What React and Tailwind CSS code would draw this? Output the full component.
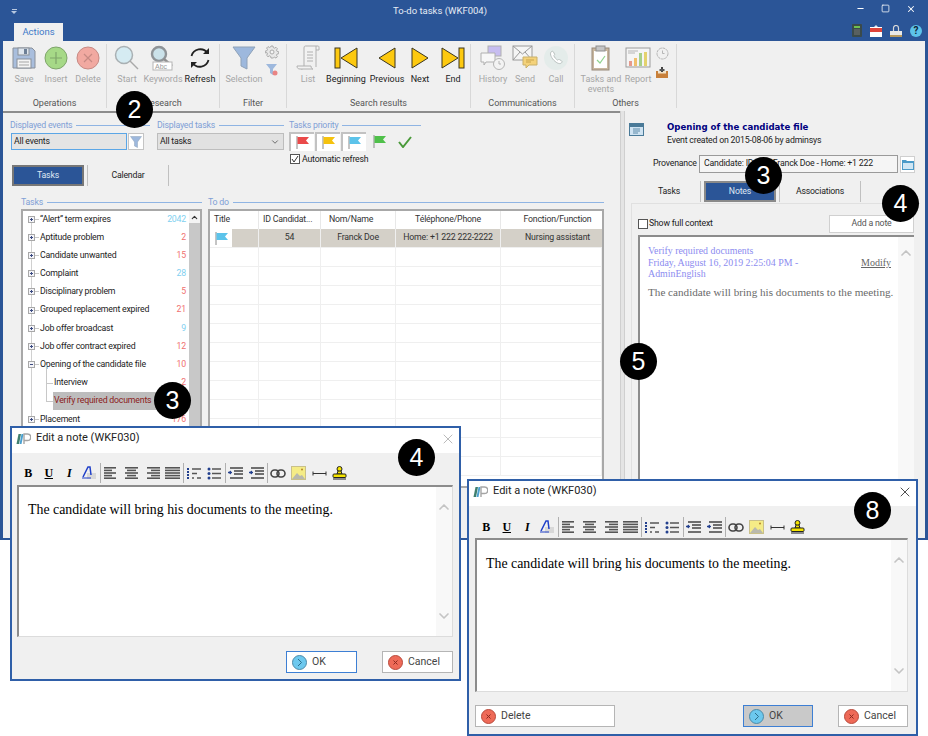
import { ChevronUp, ChevronDown, X, Minus, Square } from "lucide-react";

const Save = () => (
  <svg width="24" height="24" viewBox="0 0 24 24">
    <path d="M1 2h19l3 3v17H1z" fill="#a9bedd" stroke="#8a9099" />
    <rect x="6" y="2" width="11" height="7" fill="#dfe6ee" stroke="#8a9099" />
    <rect x="12" y="3" width="3" height="5" fill="#6d7f96" />
    <rect x="5" y="13" width="14" height="9" fill="#f4f4f4" stroke="#8a9099" />
    <path d="M7 16h10M7 19h10" stroke="#a5a5a5" />
  </svg>
);
const Circle = ({ fill, stroke, children }) => (
  <svg width="24" height="24" viewBox="0 0 24 24">
    <circle cx="12" cy="12" r="11" fill={fill} stroke={stroke} />
    <g stroke={stroke} strokeWidth="1.2" fill="none">{children}</g>
  </svg>
);
const Magnifier = () => (
  <svg width="26" height="26" viewBox="0 0 26 26">
    <circle cx="10" cy="10" r="8.5" fill="#d5ebf2" stroke="#a9b0b3" strokeWidth="1.5" />
    <path d="M16 16l8 8" stroke="#a9a9a9" strokeWidth="1.5" />
  </svg>
);
const Keywords = () => (
  <svg width="26" height="26" viewBox="0 0 26 26">
    <circle cx="9" cy="9" r="7" fill="#cbe2ea" stroke="#8f9498" strokeWidth="2.4" />
    <path d="M14 14l8 7" stroke="#8f8f8f" strokeWidth="2.4" />
    <rect x="3" y="17" width="19" height="8" fill="#fff" stroke="#b5b5b5" />
    <text x="5" y="24" fontSize="7" fill="#9a9a9a" fontFamily="Liberation Sans, sans-serif">Abc</text>
  </svg>
);
const Refresh = () => (
  <svg width="24" height="24" viewBox="0 0 24 24" fill="none" stroke="#222" strokeWidth="1.8">
    <path d="M3.5 10a9 9 0 0 1 16-3" />
    <path d="M20.5 14a9 9 0 0 1-16 3" />
    <path d="M21 2v6h-6z" fill="#222" stroke="none" />
    <path d="M3 22v-6h6z" fill="#222" stroke="none" />
  </svg>
);
const Funnel = ({ size = 24 }) => (
  <svg width={size} height={size} viewBox="0 0 24 24">
    <path d="M1 1h22l-8 11v11l-6-3v-8z" fill="#9db8dd" stroke="#8fa2b8" />
  </svg>
);
const Gear = () => (
  <svg width="14" height="14" viewBox="0 0 14 14" fill="#e8e8e8" stroke="#aaa">
    <path d="M6 1h2l.3 1.6 1.3.6L11 2.3l1.4 1.4-.9 1.4.6 1.3 1.6.3v2l-1.6.3-.6 1.3.9 1.4-1.4 1.4-1.4-.9-1.3.6L8 13H6l-.3-1.6-1.3-.6-1.4.9-1.4-1.4.9-1.4-.6-1.3L.3 8V6l1.6-.3.6-1.3-.9-1.4L3 1.6l1.4.9 1.3-.6z" />
    <circle cx="7" cy="7" r="2" fill="#f4f4f4" />
  </svg>
);
const SmallFunnel = () => (
  <svg width="14" height="14" viewBox="0 0 14 14">
    <path d="M1 1h11l-4 5v6l-3-2V6z" fill="#9db8dd" />
    <circle cx="10" cy="10" r="2.5" fill="#e98484" />
  </svg>
);
const Scroll = () => (
  <svg width="24" height="26" viewBox="0 0 24 26" fill="#f2f2f2" stroke="#b0b0b0">
    <path d="M5 24c3 0 3-2 3-3V3c0-2 1-2 2-2h12c1 0 1 1 1 2v2h-3" />
    <path d="M1 21h14c0 2 1 3 2 3H4c-2 0-3-1-3-3z" />
    <path d="M20 1v21" />
    <path d="M11 7h6M11 10h6M11 13h6M11 16h6" />
  </svg>
);
const Beginning = () => (
  <svg width="24" height="22" viewBox="0 0 24 22">
    <rect x="1" y="1" width="5" height="20" fill="#fdc90f" stroke="#3a3520" />
    <path d="M23 1v20L7 11z" fill="#fdc90f" stroke="#3a3520" />
  </svg>
);
const Previous = () => (
  <svg width="18" height="22" viewBox="0 0 18 22">
    <path d="M17 1v20L1 11z" fill="#fdc90f" stroke="#3a3520" />
  </svg>
);
const Next = () => (
  <svg width="18" height="22" viewBox="0 0 18 22">
    <path d="M1 1v20l16-10z" fill="#fdc90f" stroke="#3a3520" />
  </svg>
);
const End = () => (
  <svg width="24" height="22" viewBox="0 0 24 22">
    <rect x="18" y="1" width="5" height="20" fill="#fdc90f" stroke="#3a3520" />
    <path d="M1 1v20l16-10z" fill="#fdc90f" stroke="#3a3520" />
  </svg>
);
const History = () => (
  <svg width="26" height="26" viewBox="0 0 26 26">
    <rect x="8" y="1" width="13" height="10" fill="#c7bdf0" stroke="#b0b0b0" />
    <path d="M1 8h14v9H6l-2 3v-3H1z" fill="#f7f7f7" stroke="#b0b0b0" />
    <circle cx="19" cy="19" r="5.5" fill="#f3f3f3" stroke="#b5b5b5" />
    <path d="M19 16v3h2" fill="none" stroke="#b5b5b5" />
  </svg>
);
const Send = () => (
  <svg width="26" height="26" viewBox="0 0 26 26">
    <rect x="1" y="1" width="19" height="14" fill="#f5f5f5" stroke="#9a9a9a" />
    <path d="M1 1l9.500 8L20 1M1 15l7-8M20 15l-7-8" fill="none" stroke="#9a9a9a" />
    <path d="M11 12h14v8h-8l-3 3v-3h-3z" fill="#f4d27a" stroke="#c9b06b" />
    <path d="M14 15h8M14 17h5" stroke="#c9a44c" />
  </svg>
);
const Call = () => (
  <svg width="24" height="24" viewBox="0 0 24 24">
    <circle cx="12" cy="12" r="12" fill="#e4ecea" />
    <path d="M7 6c1-1 2-1 2.500 0l1 2c.3 .7 0 1-.7 1.500 .7 2 2.200 3.700 4 4.700 .6-.7 1-1 1.700-.6l2 1.200c.8.5.7 1.400 0 2-1.500 1.500-4 .7-6.500-1.500C7.500 12.500 5.500 8 7 6z" fill="#fff" stroke="#b9c1bf" />
  </svg>
);
const Clipboard = () => (
  <svg width="20" height="26" viewBox="0 0 20 26">
    <rect x="1" y="3" width="17" height="22" fill="#c9b79f" stroke="#97897b" />
    <rect x="3" y="6" width="13" height="17" fill="#fff" />
    <rect x="5" y="1" width="9" height="5" fill="#c5c5c5" stroke="#8f8f8f" />
    <path d="M6 15l3 3 5-7" fill="none" stroke="#8fd38f" strokeWidth="1.2" />
  </svg>
);
const Report = () => (
  <svg width="26" height="22" viewBox="0 0 26 22">
    <rect x="1" y="1" width="24" height="19" fill="#f5f5f5" stroke="#9b9b9b" />
    <path d="M3 4h10M3 6h7" stroke="#b5b5b5" />
    <rect x="4" y="14" width="3" height="5" fill="#e69a8d" />
    <rect x="9" y="11" width="3" height="8" fill="#f0bf6e" />
    <rect x="14" y="6" width="3" height="13" fill="#a6cf8a" />
    <rect x="19" y="5" width="3" height="14" fill="#e4d26e" />
  </svg>
);
const Clock = () => (
  <svg width="13" height="13" viewBox="0 0 13 13" fill="none" stroke="#b5b5b5">
    <circle cx="6.500" cy="6.500" r="5.500" strokeDasharray="3 .6" />
    <path d="M6.500 3.500v3h2" />
  </svg>
);
const Tray = () => (
  <svg width="14" height="12" viewBox="0 0 14 12">
    <path d="M1 5h12v7H1z" fill="#c8803a" />
    <path d="M3 5h8v2.500H3z" fill="#f2e3c8" />
    <path d="M7 1v5" stroke="#444" strokeWidth="2" />
    <path d="M4.500 3h5v2h-5z" fill="#555" />
  </svg>
);
const Flag = ({ color }) => (
  <svg width="15" height="15" viewBox="0 0 15 15">
    <path d="M2 1v13" stroke="#8a8a8a" />
    <path d="M2.500 2H14l-3 3.500L14 9H2.500z" fill={color} />
  </svg>
);
const Logo = () => (
  <svg width="15" height="13" viewBox="0 0 15 13">
    <path d="M0.500 12l2-10h2.500l-2 10z" fill="#3f7f6e" />
    <path d="M3.500 12l2-10h2l-2 10z" fill="#49a0d0" />
    <path d="M8 12V2h3.500a3 3 0 0 1 0 6.500H8" fill="none" stroke="#a5a5a5" strokeWidth="1.400" />
  </svg>
);
const CircleButton = ({ fill, stroke, kind }) => (
  <svg width="15" height="15" viewBox="0 0 15 15">
    <circle cx="7.500" cy="7.500" r="7" fill={fill} stroke={stroke} />
    {kind === "ok" ? (
      <path d="M6 4l3.500 3.500L6 11" fill="none" stroke="#2d6f8c" />
    ) : (
      <path d="M5.500 5.500l4 4M9.500 5.500l-4 4" stroke="#8c2a20" />
    )}
  </svg>
);

const Lines = ({ rows }) => (
  <svg width="15" height="12" viewBox="0 0 15 12">
    {rows.map((r, i) => (
      <rect key={i} x={r[0]} y={i * 2.600} width={r[1]} height="1.600" fill="#555" />
    ))}
  </svg>
);
const OrderedList = () => (
  <svg width="15" height="13" viewBox="0 0 15 13">
    <path d="M1 1v11" stroke="#23408e" strokeWidth="2" strokeDasharray="2 1" />
    <path d="M5 2h9M5 6.500h5M5 11h2M10 11h4" stroke="#555" strokeWidth="1.300" />
  </svg>
);
const BulletList = () => (
  <svg width="15" height="13" viewBox="0 0 15 13">
    <circle cx="2" cy="2" r="1.500" fill="#23408e" />
    <circle cx="2" cy="6.500" r="1.500" fill="#23408e" />
    <circle cx="2" cy="11" r="1.500" fill="#23408e" />
    <path d="M5 2h9M5 6.500h9M5 11h9" stroke="#555" strokeWidth="1.300" />
  </svg>
);
const Indent = () => (
  <svg width="16" height="12" viewBox="0 0 16 12">
    <path d="M2 1h13M6 4h9M6 7h9M2 11h13" stroke="#444" strokeWidth="1.500" />
    <path d="M0 5.500h4" stroke="#23408e" strokeWidth="1.400" />
    <path d="M3 3.500v4l-3-2z" fill="#23408e" />
  </svg>
);
const LinkIcon = () => (
  <svg width="16" height="9" viewBox="0 0 16 9" fill="none" stroke="#444" strokeWidth="1.600">
    <rect x="1" y="1" width="8" height="7" rx="3.500" />
    <rect x="7" y="1" width="8" height="7" rx="3.500" />
  </svg>
);
const ImageIcon = () => (
  <svg width="15" height="14" viewBox="0 0 15 14">
    <rect x=".5" y=".5" width="14" height="13" fill="#f5ec86" stroke="#c9c08a" />
    <path d="M1 13l5-6 3 3 2-1 3 4z" fill="#b9b9ad" />
    <circle cx="11" cy="3.500" r="1" fill="#b5862c" />
  </svg>
);
const HrIcon = () => (
  <svg width="15" height="7" viewBox="0 0 15 7">
    <path d="M1 3.500h13" stroke="#333" />
    <path d="M1 1.500v4M14 1.500v4" stroke="#333" />
  </svg>
);
const Stamp = () => (
  <svg width="15" height="14" viewBox="0 0 15 14">
    <circle cx="7.500" cy="3" r="2.500" fill="#f5e400" stroke="#222" />
    <path d="M6 5h3l1 3H5z" fill="#f5e400" stroke="#222" />
    <rect x="1" y="8" width="13" height="3.500" rx="1" fill="#f5e400" stroke="#222" />
    <path d="M1 13h13" stroke="#222" />
  </svg>
);
const ToolSep = () => <div className="w-[1px] h-[20px] bg-[#b0b0b0]" />;

// one cell of the big ribbon
const RibbonItem = ({ w, label, off, icon }) => (
  <div className={`flex flex-col items-center shrink-0 ${w}`}>
    <div className="h-[28px] flex items-center justify-center">{icon}</div>
    <div className={`mt-[2px] leading-[10px] text-center ${off ? "text-[#a6a6a6]" : "text-[#222]"}`}>{label}</div>
  </div>
);

const RibbonGroup = ({ w, pad, label, children }) => (
  <div className={`shrink-0 flex flex-col border-r border-[#d8d8d8] h-[64px] text-[9px] tracking-normal ${w}`}>
    <div className={`flex flex-1 items-start ${pad}`}>{children}</div>
    <div className="text-center text-[#555] leading-[10px]">{label}</div>
  </div>
);

const Legend = ({ label, className }) => (
  <div className={`flex items-center gap-[4px] h-[10px] ${className}`}>
    <span className="text-[#7f9fd6] leading-[10px] whitespace-nowrap">{label}</span>
    <div className="flex-1 h-[1px] bg-[#8fb4e3]" />
  </div>
);

const tasks = [
  ["\u201CAlert\u201D term expires", "2042", "text-[#7fd0f0]"],
  ["Aptitude problem", "2", "text-[#f07070]"],
  ["Candidate unwanted", "15", "text-[#f07070]"],
  ["Complaint", "28", "text-[#7fd0f0]"],
  ["Disciplinary problem", "5", "text-[#f07070]"],
  ["Grouped replacement expired", "21", "text-[#f07070]"],
  ["Job offer broadcast", "9", "text-[#7fd0f0]"],
  ["Job offer contract expired", "12", "text-[#f07070]"],
  ["Opening of the candidate file", "10", "text-[#f07070]", true],
];

const TreeBox = ({ open }) => (
  <div className="relative w-[7px] h-[7px] border border-[#a8a8a8] bg-[#f4f4f8] shrink-0">
    <div className="absolute left-[1px] top-[2px] w-[3px] h-[1px] bg-[#3a4a80]" />
    {!open && <div className="absolute left-[2px] top-[1px] w-[1px] h-[3px] bg-[#3a4a80]" />}
  </div>
);

const TreeRow = ({ label, count, color, open }) => (
  <div className="flex items-center h-[18.2px] pl-[5px] pr-[3px]">
    <TreeBox open={open} />
    <div className="w-[4px] h-[1px] bg-[#c8c8c8] mr-[1px]" />
    <span className="flex-1 text-[#222] whitespace-nowrap">{label}</span>
    <span className={color}>{count}</span>
  </div>
);

const cols = ["w-[49px]", "w-[62px]", "w-[75px]", "w-[105px]", "flex-1"];
const GridRow = () => (
  <div className="flex h-[19px] border-b border-[#efefef]">
    {cols.map((c) => (
      <div key={c} className={`${c} border-r border-[#efefef]`} />
    ))}
  </div>
);

const Btn = ({ children }) => <div className="w-[20.5px] h-[20px] flex items-center justify-center shrink-0">{children}</div>;

const Toolbar = () => {
  const B = "font-['Liberation_Serif',serif] text-[12px] text-black";
  return (
    <div className="flex items-center h-[20px] pl-[1px]">
      <Btn><span className={`${B} font-bold`}>B</span></Btn>
      <Btn><span className={`${B} font-bold underline`}>U</span></Btn>
      <Btn><span className={`${B} font-bold italic`}>I</span></Btn>
      <Btn>
        <svg width="15" height="14" viewBox="0 0 15 14">
          <rect x="5" y="7" width="9" height="6" fill="#d8d8d8" />
          <path d="M1 11L6 1h2l1 8" fill="none" stroke="#2040c8" strokeWidth="1.500" />
          <path d="M0 12h9" stroke="#2040c8" />
        </svg>
      </Btn>
      <ToolSep />
      <Btn><Lines rows={[[0, 12], [0, 8], [0, 12], [0, 8], [0, 12]]} /></Btn>
      <Btn><Lines rows={[[1, 13], [3, 9], [1, 13], [3, 9], [1, 13]]} /></Btn>
      <Btn><Lines rows={[[2, 13], [6, 9], [2, 13], [6, 9], [2, 13]]} /></Btn>
      <Btn><Lines rows={[[0, 15], [0, 15], [0, 15], [0, 15], [0, 15]]} /></Btn>
      <ToolSep />
      <Btn><OrderedList /></Btn>
      <Btn><BulletList /></Btn>
      <ToolSep />
      <Btn><Indent /></Btn>
      <Btn><Indent /></Btn>
      <ToolSep />
      <Btn><LinkIcon /></Btn>
      <Btn><ImageIcon /></Btn>
      <Btn><HrIcon /></Btn>
      <Btn><Stamp /></Btn>
    </div>
  );
};

const DialogButton = ({ w, children, className }) => (
  <div className={`flex items-center gap-[5px] h-[22px] pl-[5px] bg-white border text-[#444] text-[10.500px] tracking-normal ${w} ${className}`}>
    {children}
  </div>
);

const NoteDialog = ({ pos, closeColor, toolTop, buttons, bodyPad, textTop }) => (
  <div className={`absolute ${pos} flex flex-col bg-[#f0f0f0] border-2 border-[#2f5fa8]`}>
    <div className="flex items-center h-[25px] bg-white pl-[4px] pr-[3px] pb-[4px] shrink-0">
      <Logo />
      <span className="ml-[5px] text-[11px] tracking-normal text-[#222] flex-1">Edit a note (WKF030)</span>
      <X className={closeColor} size={16} strokeWidth={1.200} />
    </div>
    <div className={`flex-1 flex flex-col ${bodyPad}`}>
      <div className={toolTop}>
        <Toolbar />
      </div>
      <div className="flex-1 flex bg-white border-t-2 border-l-2 border-[#8c8c8c] border-b border-b-[#dcdcdc] border-r border-r-[#dcdcdc]">
        <div className={`flex-1 pl-[9px] font-['Liberation_Serif',serif] text-[13.850px] tracking-normal leading-[16px] text-black ${textTop}`}>
          The candidate will bring his documents to the meeting.
        </div>
        <div className="w-[16px] bg-[#f8f8f8] flex flex-col items-center justify-between pt-[12px] pb-[12px]">
          <ChevronUp size={16} color="#c4c4c4" strokeWidth={2.500} />
          <ChevronDown size={16} color="#c4c4c4" strokeWidth={2.500} />
        </div>
      </div>
      {buttons}
    </div>
  </div>
);

const Badge = ({ pos, children }) => (
  <div className={`absolute ${pos} w-[37px] h-[37px] rounded-full bg-black text-white flex items-center justify-center font-['Liberation_Sans',sans-serif] text-[25px] tracking-normal leading-none`}>
    {children}
  </div>
);

export default function App() {
  return (
    <div className="relative w-[928px] h-[736px] bg-white overflow-hidden font-['Roboto',sans-serif] text-[8.750px] tracking-[-0.2px]">
      {/* main window */}
      <div className="h-[540px] flex flex-col bg-[#2b5597] px-[3px] pb-[2px] overflow-hidden">
        {/* title bar */}
        <div className="h-[41px] shrink-0 relative flex flex-col -mx-[3px]">
          <div className="h-[23px] flex items-center px-[11px] text-white">
            <div className="w-[6px] flex flex-col gap-[1px] items-center">
              <div className="w-[5px] h-[1px] bg-[#b8c8e0]" />
              <div className="w-0 h-0 border-l-[3px] border-r-[3px] border-t-[3px] border-l-transparent border-r-transparent border-t-[#b8c8e0]" />
            </div>
            <span className="flex-1 text-center text-[9.500px] tracking-normal text-[#e6ecf5] pl-[6px]">To-do tasks (WKF004)</span>
            <div className="flex items-center gap-[16px] -mt-[6px] -translate-x-[1px]">
              <Minus size={9} color="#fff" strokeWidth={3} />
              <Square size={9} color="#fff" strokeWidth={2} />
              <X size={10} color="#fff" strokeWidth={2.500} />
            </div>
          </div>
          <div className="flex-1 flex items-end pl-[14px] pr-[6px]">
            <div className="w-[49px] h-[18px] bg-[#f0f0f0] flex items-center justify-center text-[#3d79c8] text-[9.500px] tracking-normal">Actions</div>
            <div className="flex-1" />
            <div className="flex items-center gap-[8px] pb-[4px]">
              <svg width="10" height="13" viewBox="0 0 10 13">
                <rect width="10" height="13" rx="1" fill="#3a4a4a" />
                <rect x="2" y="2" width="6" height="2" fill="#6fc04f" />
                <path d="M2 6h6M2 8h6M2 10h6" stroke="#777" />
              </svg>
              <svg width="12" height="12" viewBox="0 0 12 12">
                <rect y="2" width="12" height="10" fill="#fff" />
                <rect y="3" width="12" height="4" fill="#e0443a" />
                <path d="M4 2l2-2 2 2" fill="#dfe6ee" />
              </svg>
              <svg width="12" height="12" viewBox="0 0 12 12">
                <path d="M3.500 6V3a2.500 2.500 0 0 1 5 0v3" fill="none" stroke="#d8d8d8" strokeWidth="1.200" />
                <rect y="6" width="12" height="6" fill="#e9e9e9" />
                <rect y="10" width="12" height="2" fill="#b89a60" />
              </svg>
              <div className="w-[12px] h-[12px] rounded-full bg-[#5cc3ea] text-[#123] flex items-center justify-center text-[10px] font-bold leading-none">?</div>
            </div>
          </div>
        </div>

        {/* ribbon */}
        <div className="h-[70px] shrink-0 bg-[#f0f0f0] flex pt-[3px]">
          <RibbonGroup w="w-[104px]" pad="pl-[5px]" label="Operations">
            <RibbonItem w="w-[32px]" off label="Save" icon={<Save />} />
            <RibbonItem w="w-[32px]" off label="Insert" icon={<Circle fill="#a6d987" stroke="#7fa56b"><path d="M12 6v12M6 12h12" /></Circle>} />
            <RibbonItem w="w-[32px]" off label="Delete" icon={<Circle fill="#f1a9a1" stroke="#c68a84"><path d="M8 8l8 8M16 8l-8 8" /></Circle>} />
          </RibbonGroup>
          <RibbonGroup w="w-[113px]" pad="pl-[6px]" label="Research">
            <RibbonItem w="w-[28px]" off label="Start" icon={<Magnifier />} />
            <RibbonItem w="w-[44px]" off label="Keywords" icon={<Keywords />} />
            <RibbonItem w="w-[30px]" label="Refresh" icon={<Refresh />} />
          </RibbonGroup>
          <RibbonGroup w="w-[67px]" pad="pl-[4px]" label="Filter">
            <RibbonItem w="w-[40px]" off label="Selection" icon={<Funnel />} />
            <div className="w-[16px] flex flex-col items-center gap-[4px] pt-[1px]">
              <Gear />
              <SmallFunnel />
            </div>
          </RibbonGroup>
          <RibbonGroup w="w-[184px]" pad="pl-[9px]" label="Search results">
            <RibbonItem w="w-[24px]" off label="List" icon={<Scroll />} />
            <RibbonItem w="w-[52px]" label="Beginning" icon={<Beginning />} />
            <RibbonItem w="w-[30px]" label="Previous" icon={<Previous />} />
            <RibbonItem w="w-[36px]" label="Next" icon={<Next />} />
            <RibbonItem w="w-[30px]" label="End" icon={<End />} />
          </RibbonGroup>
          <RibbonGroup w="w-[104px]" pad="pl-[5px]" label="Communications">
            <RibbonItem w="w-[34px]" off label="History" icon={<History />} />
            <RibbonItem w="w-[30px]" off label="Send" icon={<Send />} />
            <RibbonItem w="w-[32px]" off label="Call" icon={<Call />} />
          </RibbonGroup>
          <RibbonGroup w="w-[102px]" pad="pl-[4px]" label="Others">
            <RibbonItem w="w-[44px]" off label={<>Tasks and<br />events</>} icon={<Clipboard />} />
            <RibbonItem w="w-[30px]" off label="Report" icon={<Report />} />
            <div className="w-[18px] flex flex-col items-center gap-[6px] pt-[3px]">
              <Clock />
              <Tray />
            </div>
          </RibbonGroup>
          <div className="flex-1" />
        </div>

        {/* work area */}
        <div className="flex-1 flex bg-[#f0f0f0] min-h-0">
          {/* left side */}
          <div className="w-[617px] shrink-0 border-t-2 border-[#8c8c8c] pl-[7px] pt-[7px]">
            <div className="flex h-[45px]">
              <div className="w-[140px] shrink-0">
                <Legend label="Displayed events" />
                <div className="flex mt-[3px] pl-[1px]">
                  <div className="w-[116px] h-[17px] bg-[#e4e4e4] border border-[#5ba6e6] flex items-center pl-[2px] text-[#222]">All events</div>
                  <div className="ml-[1px] w-[16px] h-[17px] bg-white border border-[#c4c4c4] flex items-center justify-center">
                    <Funnel size={12} />
                  </div>
                </div>
              </div>
              <div className="w-[127px] shrink-0 ml-[7px]">
                <Legend label="Displayed tasks" />
                <div className="mt-[3px] h-[17px] bg-[#e1e1e1] border border-[#bdbdbd] flex items-center justify-between pl-[2px] pr-[3px] text-[#222]">
                  All tasks
                  <ChevronDown size={10} color="#555" />
                </div>
              </div>
              <div className="w-[132px] shrink-0 ml-[5px]">
                <Legend label="Tasks priority" />
                <div className="flex items-center mt-[2px]">
                  <div className="w-[25px] h-[19px] bg-white border-t-2 border-l-2 border-[#c2c2c2] flex items-center justify-center"><Flag color="#ea4a4a" /></div>
                  <div className="w-[25px] h-[19px] ml-[1px] bg-white border-t-2 border-l-2 border-[#c2c2c2] flex items-center justify-center"><Flag color="#f5c20e" /></div>
                  <div className="w-[25px] h-[19px] ml-[1px] bg-white border-t-2 border-l-2 border-[#c2c2c2] flex items-center justify-center"><Flag color="#5cc3ea" /></div>
                  <div className="w-[15px] ml-[6px]"><Flag color="#4fc04a" /></div>
                  <svg className="ml-[11px]" width="14" height="12" viewBox="0 0 14 12">
                    <path d="M1 6l4 5L13 1" fill="none" stroke="#4a9a3a" strokeWidth="2" />
                  </svg>
                </div>
                <label className="flex items-center gap-[2px] mt-[3px] pl-[1px] text-[#222] leading-[10px]">
                  <div className="w-[10px] h-[10px] border border-[#555] bg-white flex items-center justify-center">
                    <svg width="8" height="8" viewBox="0 0 8 8"><path d="M1 4l2 3 4-6" fill="none" stroke="#333" /></svg>
                  </div>
                  Automatic refresh
                </label>
              </div>
            </div>

            <div className="flex h-[21px] pl-[2px]">
              <div className="w-[72px] bg-[#2b5597] border-2 border-[#777] text-[#dfe7f3] flex items-center justify-center">Tasks</div>
              <div className="w-[1px] bg-[#c0c0c0] ml-[3px]" />
              <div className="w-[80px] flex items-center justify-center text-[#222]">Calendar</div>
              <div className="w-[1px] bg-[#c0c0c0]" />
            </div>

            <div className="flex mt-[11px] pl-[11px]">
              <div className="w-[181px] shrink-0">
                <Legend label="Tasks" />
                <div className="mt-[2px] h-[279px] flex bg-white border-2 border-[#a8a8a8]">
                  <div className="relative flex-1 min-w-0">
                    <div className="absolute left-[8px] top-[8px] w-[1px] h-[200px] bg-[#d0d0d0]" />
                    <div className="relative -mt-[1px]">
                      {tasks.map((t) => (
                        <TreeRow key={t[0]} label={t[0]} count={t[1]} color={t[2]} open={t[3]} />
                      ))}
                      <div className="relative flex items-center h-[18.2px] pl-[31px] pr-[3px]">
                        <div className="absolute left-[23px] top-[-9px] w-[1px] h-[36px] bg-[#c8c8c8]" />
                        <div className="absolute left-[23px] top-[9px] w-[7px] h-[1px] bg-[#c8c8c8]" />
                        <span className="flex-1 text-[#222]">Interview</span>
                        <span className="text-[#f07070]">2</span>
                      </div>
                      <div className="relative flex items-center h-[18.2px] pl-[30px] pr-[3px]">
                        <div className="absolute left-[23px] top-[9px] w-[7px] h-[1px] bg-[#c8c8c8]" />
                        <span className="bg-[#bdbdbd] text-[#8b2020] pl-[1px] pr-[12px] h-[18px] flex items-center">Verify required documents</span>
                      </div>
                      <TreeRow label="Placement" count="176" color="text-[#f07070]" />
                    </div>
                  </div>
                  <div className="w-[11px] shrink-0 bg-[#c8c8c8] flex flex-col">
                    <div className="h-[12px] bg-[#f4f4f4] flex items-center justify-center">
                      <ChevronUp size={9} color="#333" strokeWidth={3} />
                    </div>
                  </div>
                </div>
              </div>
              <div className="w-[396px] shrink-0 ml-[6px]">
                <Legend label="To do" />
                <div className="mt-[2px] h-[279px] bg-white border-2 border-[#a8a8a8] text-[#333]">
                  <div className="flex h-[18px] items-center">
                    <div className="w-[49px] pl-[4px] border-r border-[#e8e8e8] h-full flex items-center">Title</div>
                    <div className="w-[62px] pl-[4px] border-r border-[#e8e8e8] h-full flex items-center whitespace-nowrap">ID Candidat...</div>
                    <div className="w-[75px] pl-[8px] border-r border-[#e8e8e8] h-full flex items-center">Nom/Name</div>
                    <div className="w-[105px] border-r border-[#e8e8e8] h-full flex items-center justify-center">Téléphone/Phone</div>
                    <div className="flex-1 h-full flex items-center justify-center pl-[12px]">Fonction/Function</div>
                  </div>
                  <div className="flex h-[19px] border-b border-[#efefef] items-stretch">
                    <div className="w-[22px] flex items-center justify-center"><Flag color="#5cc3ea" /></div>
                    <div className="w-[27px] bg-[#d4d0c8] border-r border-[#efefef]" />
                    <div className="w-[62px] bg-[#d4d0c8] border-r border-[#efefef] flex items-center justify-center">54</div>
                    <div className="w-[75px] bg-[#d4d0c8] border-r border-[#efefef] flex items-center justify-center">Franck Doe</div>
                    <div className="w-[105px] bg-[#d4d0c8] border-r border-[#efefef] flex items-center justify-center">Home: +1 222 222-2222</div>
                    <div className="flex-1 bg-[#d4d0c8] flex items-center justify-center pl-[12px]">Nursing assistant</div>
                  </div>
                  {Array.from({ length: 12 }).map((_, i) => (
                    <GridRow key={i} />
                  ))}
                </div>
              </div>
            </div>
          </div>

          {/* splitter */}
          <div className="w-[5px] shrink-0 bg-[#e4e4e4] border-l border-r border-[#cfcfcf]" />

          {/* right side */}
          <div className="flex-1 pt-[7px] pr-[8px] min-w-0">
            <div className="flex">
              <svg className="mt-[4px] ml-[4px] shrink-0" width="15" height="14" viewBox="0 0 15 14">
                <rect x=".5" y="1.500" width="14" height="12" fill="#cfe3f2" stroke="#4a7a98" />
                <rect x="1" y="2" width="13" height="3" fill="#4a7a98" />
                <path d="M4 7h7M4 9h7M4 11h5" stroke="#5d8aa8" />
              </svg>
              <div className="ml-[23px] pt-[4px]">
                <div className="font-['DejaVu_Sans',sans-serif] font-bold text-[8.600px] tracking-normal leading-[11px] text-[#000080] whitespace-nowrap">Opening of the candidate file</div>
                <div className="mt-[2px] leading-[10px] text-[#222] whitespace-nowrap">Event created on 2015-08-06 by adminsys</div>
              </div>
            </div>
            <div className="flex items-center mt-[10px] pl-[28px]">
              <span className="w-[46px] text-[#222]">Provenance</span>
              <div className="w-[199px] h-[18px] bg-[#f5f5f5] border border-[#9a9a9a] flex items-center pl-[4px] text-[#222] overflow-hidden whitespace-nowrap">
                Candidate: ID: 54 - Franck Doe - Home: +1 222
              </div>
              <div className="w-[15px] h-[17px] ml-[2px] bg-white border border-[#cfcfcf] flex items-center justify-center">
                <svg width="12" height="11" viewBox="0 0 12 11">
                  <path d="M0 1h4l1 1h7v9H0z" fill="#4a9ac8" />
                  <rect x="1" y="4" width="10" height="6" fill="#cfe6f4" />
                </svg>
              </div>
            </div>
            <div className="flex h-[21px] mt-[8px] pl-[13px]">
              <div className="w-[62px] flex items-center justify-center text-[#222]">Tasks</div>
              <div className="w-[1px] bg-[#c0c0c0]" />
              <div className="w-[72px] ml-[3px] bg-[#2b5597] border-2 border-[#8a8a8a] flex items-center justify-center text-[#dfe7f3]">Notes</div>
              <div className="w-[1px] bg-[#c0c0c0] ml-[3px]" />
              <div className="w-[80px] flex items-center justify-center text-[#222]">Associations</div>
              <div className="w-[1px] bg-[#c0c0c0]" />
            </div>
            <div className="mt-[1px] ml-[6px] mr-[-3px] h-[340px] border-t border-l border-[#e0e0e0] pl-[6px] pr-[6px]">
              <div className="flex items-center justify-between h-[29px] pt-[11px]">
                <label className="flex items-center gap-[1px] text-[#222]">
                  <div className="w-[10px] h-[10px] border border-[#555] bg-white" />
                  Show full context
                </label>
                <div className="w-[85px] h-[18px] bg-white border border-[#d0d0d0] flex items-center justify-center text-[#555]">Add a note</div>
              </div>
              <div className="mt-[2px] h-[300px] flex bg-white border-t-2 border-l-2 border-[#8c8c8c] font-['Liberation_Serif',serif] tracking-normal">
                <div className="flex-1 pl-[8px] pt-[8px] min-w-0">
                  <div className="flex items-center">
                    <div className="flex-1 text-[9.900px] leading-[11.500px] text-[#8c8cf0]">
                      Verify required documents
                      <br />
                      Friday, August 16, 2019 2:25:04 PM -
                      <br />
                      AdminEnglish
                    </div>
                    <span className="text-[10px] text-[#666] underline mr-[7px]">Modify</span>
                  </div>
                  <div className="mt-[5px] text-[11.150px] leading-[14px] text-[#6a6a6a] whitespace-nowrap">The candidate will bring his documents to the meeting.</div>
                </div>
                <div className="w-[16px] bg-[#f8f8f8] flex flex-col items-center pt-[8px]">
                  <ChevronUp size={16} color="#c4c4c4" strokeWidth={2.500} />
                </div>
              </div>
            </div>
          </div>
        </div>
      </div>

      <NoteDialog
        pos="left-[10px] top-[426px] w-[451px] h-[255px]"
        closeColor="text-[#a8a8a8]"
        toolTop="pt-[10px] pb-[2px]"
        bodyPad="pl-[5px] pr-[6px] pb-[6px]"
        textTop="pt-[15px]"
        buttons={
          <div className="h-[36px] flex items-end justify-end gap-[25px]">
            <DialogButton w="w-[71px]" className="border-[#3d7fd4]">
              <CircleButton fill="#6cc8ee" stroke="#4d8aa8" kind="ok" /> OK
            </DialogButton>
            <DialogButton w="w-[71px]" className="border-[#b5b5b5]">
              <CircleButton fill="#ee6a58" stroke="#b84a3c" /> Cancel
            </DialogButton>
          </div>
        }
      />
      <NoteDialog
        pos="left-[467px] top-[479px] w-[451px] h-[257px]"
        closeColor="text-[#222]"
        toolTop="pt-[11px] pb-[1px]"
        bodyPad="pl-[6px] pr-[8px] pb-[7px]"
        textTop="pt-[16px]"
        buttons={
          <div className="h-[35px] flex items-end">
            <DialogButton w="w-[140px]" className="border-[#b5b5b5]">
              <CircleButton fill="#ee6a58" stroke="#b84a3c" /> Delete
            </DialogButton>
            <div className="flex-1" />
            <DialogButton w="w-[70px]" className="!bg-[#c9c9c9] border-[#3d7fd4]">
              <CircleButton fill="#6cc8ee" stroke="#4d8aa8" kind="ok" /> OK
            </DialogButton>
            <DialogButton w="w-[70px]" className="ml-[25px] border-[#b5b5b5]">
              <CircleButton fill="#ee6a58" stroke="#b84a3c" /> Cancel
            </DialogButton>
          </div>
        }
      />

      <Badge pos="left-[116px] top-[91px]">2</Badge>
      <Badge pos="left-[745px] top-[157px]">3</Badge>
      <Badge pos="left-[882px] top-[185px]">4</Badge>
      <Badge pos="left-[620px] top-[343px]">5</Badge>
      <Badge pos="left-[154px] top-[382px]">3</Badge>
      <Badge pos="left-[398px] top-[439px]">4</Badge>
      <Badge pos="left-[854px] top-[492px]">8</Badge>
    </div>
  );
}
